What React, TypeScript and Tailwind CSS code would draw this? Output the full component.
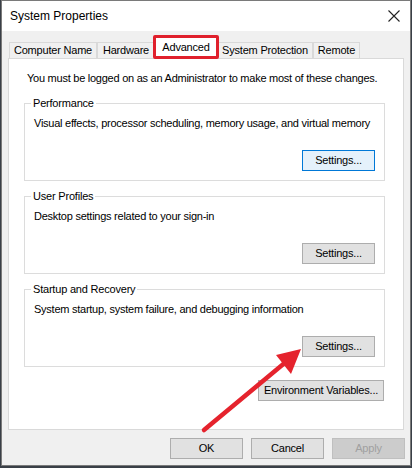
import React from "react";

const font = { fontFamily: '"Liberation Sans", Arial, sans-serif' };

function Btn({
  children,
  className = "",
  variant = "normal",
}: {
  children: React.ReactNode;
  className?: string;
  variant?: "normal" | "focus" | "disabled";
}) {
  const look =
    variant === "focus"
      ? "bg-[#e5f1fb] border-[#0078d7] text-black"
      : variant === "disabled"
      ? "bg-[#cccccc] border-[#bfbfbf] text-[#a0a0a0]"
      : "bg-[#e1e1e1] border-[#adadad] text-black";
  return (
    <div
      className={`flex h-[21px] items-center justify-center whitespace-nowrap border text-[11px] tracking-[-0.2px] ${look} ${className}`}
    >
      {children}
    </div>
  );
}

function Group({ title, text }: { title: string; text: string }) {
  return (
    <div className="relative flex h-[78px] flex-col border border-[#dcdcdc] pl-[9px] pr-[9px]">
      <span className="absolute -top-[8px] left-[6px] whitespace-nowrap bg-white px-[2px] text-[11px] leading-[15px] tracking-[-0.2px]">
        {title}
      </span>
      <p className="mt-[12px] whitespace-nowrap text-[11px] leading-[15px] tracking-[-0.25px]">{text}</p>
      <div className="mb-[9px] mt-auto flex justify-end">
        <Btn className="w-[73px]" variant={title === "Performance" ? "focus" : "normal"}>
          Settings...
        </Btn>
      </div>
    </div>
  );
}

const tabs = [
  { name: "Computer Name", w: "w-[88px]" },
  { name: "Hardware", w: "w-[58px]" },
  { name: "Advanced", w: "w-[66px]" },
  { name: "System Protection", w: "w-[96px]" },
  { name: "Remote", w: "w-[47px]" },
];

export default function App() {
  return (
    <div className="relative h-[468px] w-[412px] overflow-hidden bg-[#3a3f47] text-black" style={font}>
      <div className="ml-[1px] flex h-[466px] w-[410px] flex-col border border-[#7a7a7a] bg-[#f0f0f0]">
        {/* title bar */}
        <div className="flex h-[30px] shrink-0 items-center justify-between bg-white pl-[8px] pr-[8px]">
          <span className="text-[12px]">System Properties</span>
          <svg width="14" height="14" viewBox="0 0 14 14" className="mr-[1px]">
            <path d="M1.5 1.5 L12.5 12.5 M12.5 1.5 L1.5 12.5" stroke="#222" strokeWidth="1.1" />
          </svg>
        </div>

        {/* tabs */}
        <div className="flex h-[27px] items-end pl-[7px]">
          {tabs.map((t) =>
            t.name === "Advanced" ? (
              <div
                key={t.name}
                className={`relative z-10 -mb-[1px] -mx-[2px] flex h-[24px] items-center justify-center rounded-[2px] border-[3px] border-[#e0202c] bg-white text-[11px] tracking-[-0.2px] ${t.w}`}
              >
                {t.name}
              </div>
            ) : (
              <div
                key={t.name}
                className={`flex h-[16px] items-center justify-center whitespace-nowrap border border-b-0 border-[#d9d9d9] bg-[#f0f0f0] text-[11px] tracking-[-0.2px] ${t.w}`}
              >
                {t.name}
              </div>
            )
          )}
        </div>

        {/* panel */}
        <div className="mx-[6px] flex h-[372px] flex-col border border-[#d9d9d9] bg-white pl-[15px] pr-[18px]">
          <p className="mt-[12px] whitespace-nowrap pl-[3px] text-[11px] leading-[15px] tracking-[-0.25px]">
            You must be logged on as an Administrator to make most of these changes.
          </p>
          <div className="mt-[17px] flex flex-col gap-[15px]">
            <Group title="Performance" text="Visual effects, processor scheduling, memory usage, and virtual memory" />
            <Group title="User Profiles" text="Desktop settings related to your sign-in" />
            <Group title="Startup and Recovery" text="System startup, system failure, and debugging information" />
          </div>
          <div className="mt-[13px] flex justify-end">
            <Btn className="mr-[1px] w-[126px]">Environment Variables...</Btn>
          </div>
        </div>

        {/* footer */}
        <div className="mt-[8px] flex justify-end gap-[8px] pr-[5px]">
          <Btn className="w-[73px]">OK</Btn>
          <Btn className="w-[73px]">Cancel</Btn>
          <Btn className="w-[73px]" variant="disabled">
            Apply
          </Btn>
        </div>
      </div>

      {/* annotation arrow */}
      <svg className="pointer-events-none absolute left-0 top-0" width="412" height="468" viewBox="0 0 412 468">
        <line x1="204" y1="430" x2="287" y2="361" stroke="#e5232d" strokeWidth="4.5" strokeLinecap="round" />
        <polygon points="301,349 276,355 291,374" fill="#e5232d" />
      </svg>
    </div>
  );
}
